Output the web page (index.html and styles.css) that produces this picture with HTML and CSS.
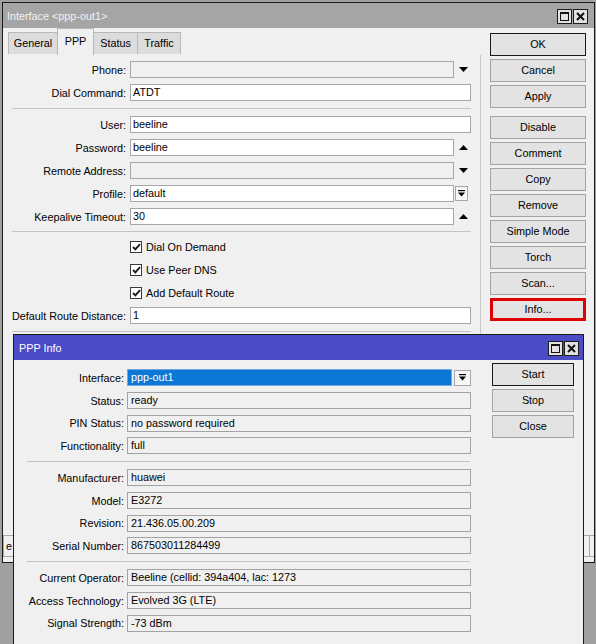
FILE: index.html
```html
<!DOCTYPE html>
<html>
<head>
<meta charset="utf-8">
<link rel="stylesheet" href="styles.css">
</head>
<body>
<div class="win main-win">
  <div class="titlebar tb-gray">
    <span class="title">Interface &lt;ppp-out1&gt;</span>
    <div class="tbtns">
      <span class="tbtn"><svg width="9" height="9" viewBox="0 0 9 9"><rect x="0.5" y="0.5" width="8" height="8" fill="none" stroke="#111" stroke-width="1"/><rect x="0" y="0" width="9" height="2" fill="#111"/></svg></span>
      <span class="tbtn"><svg width="9" height="9" viewBox="0 0 9 9"><path d="M1 1L8 8M8 1L1 8" stroke="#111" stroke-width="2"/></svg></span>
    </div>
  </div>
  <div class="main-content">
    <div class="tabpane">
      <div class="tabs">
        <div class="tab t-general">General</div>
        <div class="tab t-ppp active">PPP</div>
        <div class="tab t-status">Status</div>
        <div class="tab t-traffic">Traffic</div>
      </div>
      <div class="panel">
        <div class="form main-form">
          <div class="row"><span class="lbl">Phone:</span><span class="field short dis"></span><span class="arr"><svg width="9" height="5" viewBox="0 0 9 5"><path d="M0 0H9L4.5 5Z"/></svg></span></div>
          <div class="row"><span class="lbl">Dial Command:</span><span class="field">ATDT</span></div>
          <div class="sep s9"></div>
          <div class="row"><span class="lbl">User:</span><span class="field">beeline</span></div>
          <div class="row"><span class="lbl">Password:</span><span class="field short">beeline</span><span class="arr"><svg width="9" height="5" viewBox="0 0 9 5"><path d="M0 5H9L4.5 0Z"/></svg></span></div>
          <div class="row"><span class="lbl">Remote Address:</span><span class="field short dis"></span><span class="arr"><svg width="9" height="5" viewBox="0 0 9 5"><path d="M0 0H9L4.5 5Z"/></svg></span></div>
          <div class="row"><span class="lbl">Profile:</span><span class="field short">default</span><span class="dropbox small"><svg width="7" height="7" viewBox="0 0 7 7"><rect x="0" y="0" width="7" height="1.2"/><path d="M0 2.5H7L3.5 6.5Z"/></svg></span></div>
          <div class="row"><span class="lbl">Keepalive Timeout:</span><span class="field short">30</span><span class="arr"><svg width="9" height="5" viewBox="0 0 9 5"><path d="M0 5H9L4.5 0Z"/></svg></span></div>
          <div class="sep s8"></div>
          <div class="row chk"><span class="cbox"><svg width="9" height="8" viewBox="0 0 9 8"><path d="M1 4L3.4 6.4L8 1.2" stroke="#1a1a1a" stroke-width="1.9" fill="none"/></svg></span><span class="ctext">Dial On Demand</span></div>
          <div class="row chk"><span class="cbox"><svg width="9" height="8" viewBox="0 0 9 8"><path d="M1 4L3.4 6.4L8 1.2" stroke="#1a1a1a" stroke-width="1.9" fill="none"/></svg></span><span class="ctext">Use Peer DNS</span></div>
          <div class="row chk"><span class="cbox"><svg width="9" height="8" viewBox="0 0 9 8"><path d="M1 4L3.4 6.4L8 1.2" stroke="#1a1a1a" stroke-width="1.9" fill="none"/></svg></span><span class="ctext">Add Default Route</span></div>
          <div class="row"><span class="lbl">Default Route Distance:</span><span class="field">1</span></div>
          <div class="sep s9"></div>
        </div>
      </div>
    </div>
    <div class="btncol main-btns">
      <div class="btn def">OK</div>
      <div class="btn">Cancel</div>
      <div class="btn">Apply</div>
      <div class="btn gap-top">Disable</div>
      <div class="btn">Comment</div>
      <div class="btn">Copy</div>
      <div class="btn">Remove</div>
      <div class="btn">Simple Mode</div>
      <div class="btn">Torch</div>
      <div class="btn">Scan...</div>
      <div class="btn hl">Info...</div>
    </div>
  </div>
  <div class="statusbar">
    <span class="scell s-first">e</span>
    <span class="scell s-mid"></span>
    <span class="scell s-mid2"></span>
    <span class="scell s-last"></span>
  </div>
</div>

<div class="win info-win">
  <div class="titlebar tb-blue">
    <span class="title">PPP Info</span>
    <div class="tbtns">
      <span class="tbtn"><svg width="9" height="9" viewBox="0 0 9 9"><rect x="0.5" y="0.5" width="8" height="8" fill="none" stroke="#111" stroke-width="1"/><rect x="0" y="0" width="9" height="2" fill="#111"/></svg></span>
      <span class="tbtn"><svg width="9" height="9" viewBox="0 0 9 9"><path d="M1 1L8 8M8 1L1 8" stroke="#111" stroke-width="2"/></svg></span>
    </div>
  </div>
  <div class="info-content">
    <div class="form info-form">
      <div class="row"><span class="lbl">Interface:</span><span class="field short sel">ppp-out1</span><span class="dropbox"><svg width="7" height="7" viewBox="0 0 7 7"><rect x="0" y="0" width="7" height="1.2"/><path d="M0 2.5H7L3.5 6.5Z"/></svg></span></div>
      <div class="row"><span class="lbl">Status:</span><span class="field ro">ready</span></div>
      <div class="row"><span class="lbl">PIN Status:</span><span class="field ro">no password required</span></div>
      <div class="row"><span class="lbl">Functionality:</span><span class="field ro">full</span></div>
      <div class="sep s9"></div>
      <div class="row"><span class="lbl">Manufacturer:</span><span class="field ro">huawei</span></div>
      <div class="row"><span class="lbl">Model:</span><span class="field ro">E3272</span></div>
      <div class="row"><span class="lbl">Revision:</span><span class="field ro">21.436.05.00.209</span></div>
      <div class="row"><span class="lbl">Serial Number:</span><span class="field ro">867503011284499</span></div>
      <div class="sep s9"></div>
      <div class="row"><span class="lbl">Current Operator:</span><span class="field ro">Beeline (cellid: 394a404, lac: 1273</span></div>
      <div class="row"><span class="lbl">Access Technology:</span><span class="field ro">Evolved 3G (LTE)</span></div>
      <div class="row"><span class="lbl">Signal Strength:</span><span class="field ro">-73 dBm</span></div>
    </div>
    <div class="btncol info-btns">
      <div class="btn def">Start</div>
      <div class="btn">Stop</div>
      <div class="btn">Close</div>
    </div>
  </div>
</div>
</body>
</html>
```
FILE: styles.css
```css
html, body {
  margin: 0;
  padding: 0;
}
body {
  width: 596px;
  height: 644px;
  overflow: hidden;
  position: relative;
  background: #a0a0a0;
  font-family: "Liberation Sans", Arial, sans-serif;
  font-size: 10.8px;
  color: #000;
}
.win {
  position: absolute;
  box-sizing: border-box;
  border: 1px solid #1a1a1a;
  background: #f0f0f0;
  display: flex;
  flex-direction: column;
  overflow: hidden;
}
.main-win {
  left: 2px;
  top: 2px;
  width: 593px;
  height: 561px;
}
.info-win {
  left: 13px;
  top: 334px;
  width: 571px;
  height: 330px;
}
.titlebar {
  flex: none;
  height: 25px;
  display: flex;
  align-items: center;
  justify-content: space-between;
  font-size: 10.8px;
}
.tb-gray {
  background: #a5a5a5;
  color: #f2f2f2;
  padding: 0 6px 0 4px;
}
.tb-blue {
  background: #4b4bc6;
  color: #fff;
  padding: 0 4px 0 5px;
}
.title {
  padding-top: 1px;
}
.tbtns {
  display: flex;
  gap: 1px;
  padding-top: 2px;
}
.tbtn {
  box-sizing: border-box;
  width: 15px;
  height: 15px;
  border: 1px solid #1c1c1c;
  background: #e2e2e2;
  display: flex;
  align-items: center;
  justify-content: center;
}
.main-content {
  flex: 1;
  display: flex;
  min-height: 0;
}
.tabpane {
  width: 478px;
  flex: none;
  display: flex;
  flex-direction: column;
}
.tabs {
  height: 27px;
  flex: none;
  display: flex;
  align-items: flex-end;
  padding-left: 5px;
}
.tab {
  box-sizing: border-box;
  height: 22px;
  margin-bottom: 1px;
  border: 1px solid #b8b8b8;
  border-bottom: none;
  background: #dcdcdc;
  text-align: center;
  line-height: 21px;
  margin-right: -1px;
}
.tab.active {
  height: 27px;
  margin-bottom: 0;
  background: #f0f0f0;
  line-height: 24px;
  position: relative;
  z-index: 1;
}
.t-general { width: 50px; }
.t-ppp { width: 37px; }
.t-status { width: 45px; }
.t-traffic { width: 44px; }
.panel {
  flex: 1;
  border-right: 1px solid #c6c6c6;
  padding-top: 3px;
}
.form {
  display: flex;
  flex-direction: column;
}
.main-form {
  width: 468px;
}
.row {
  display: flex;
  align-items: center;
  height: 23px;
  flex: none;
}
.lbl {
  flex: none;
  width: 123px;
  margin-right: 4px;
  text-align: right;
  white-space: nowrap;
}
.field {
  flex: none;
  box-sizing: border-box;
  width: 341px;
  height: 17px;
  border: 1px solid #a6a6a6;
  background: #fff;
  padding-left: 2px;
  line-height: 15px;
  white-space: nowrap;
  overflow: hidden;
}
.field.short {
  width: 324px;
}
.field.dis {
  background: #f0f0f0;
}
.arr {
  flex: none;
  width: 17px;
  display: flex;
  justify-content: center;
  padding-left: 1px;
}
.arr svg, .dropbox svg {
  fill: #000;
}
.dropbox {
  flex: none;
  box-sizing: border-box;
  width: 13px;
  height: 15px;
  margin-left: 1px;
  border: 1px solid #a6a6a6;
  background: #f7f7f7;
  display: flex;
  align-items: center;
  justify-content: center;
}
.sep {
  flex: none;
  display: flex;
  align-items: center;
  padding-left: 9px;
}
.sep::before {
  content: "";
  display: block;
  width: 459px;
  height: 1px;
  background: #c4c4c4;
}
.s9 { height: 9px; }
.s8 { height: 7px; }
.chk {
  padding-left: 127px;
}
.cbox {
  box-sizing: border-box;
  width: 12px;
  height: 12px;
  border: 1px solid #3a3a3a;
  background: #fff;
  display: flex;
  align-items: center;
  justify-content: center;
  margin-right: 4px;
}
.btncol {
  display: flex;
  flex-direction: column;
  gap: 3px;
  flex: none;
}
.main-btns {
  width: 96px;
  margin-left: 9px;
  padding-top: 5px;
}
.btn {
  box-sizing: border-box;
  height: 23px;
  border: 1px solid #a3a3a3;
  background: #e3e3e3;
  text-align: center;
  line-height: 21px;
}
.btn.def {
  border-color: #1a1a1a;
}
.btn.hl {
  border: 3px solid #e00000;
  line-height: 17px;
}
.gap-top {
  margin-top: 5px;
}
.statusbar {
  flex: none;
  height: 22px;
  display: flex;
  padding: 0 0 5px 0;
}
.scell {
  box-sizing: border-box;
  border: 1px solid #a8a8a8;
  border-right: none;
  padding-left: 2px;
  line-height: 20px;
  overflow: hidden;
}
.s-first { width: 120px; }
.s-mid { width: 120px; }
.s-mid2 { flex: 1; }
.s-last { width: 5px; }
.info-content {
  flex: 1;
  display: flex;
}
.info-form {
  width: 457px;
  padding-top: 6.67px;
}
.info-form .row {
  height: 22.67px;
}
.info-form .lbl {
  width: 110px;
  margin-right: 3px;
}
.info-form .field {
  width: 344px;
  padding-left: 3px;
}
.info-form .field.short {
  width: 325px;
}
.field.ro {
  background: #f0f0f0;
  border-color: #a3a3a3;
}
.field.sel {
  background: #0a78d4;
  border-color: #76a6dc;
  color: #fff;
}
.info-form .dropbox {
  width: 17px;
  height: 16px;
  margin-left: 2px;
}
.info-form .sep {
  height: 9.33px;
  padding-left: 13px;
}
.info-form .sep::before {
  width: 443px;
}
.info-btns {
  width: 82px;
  margin-left: 21px;
  padding-top: 3px;
}
```
